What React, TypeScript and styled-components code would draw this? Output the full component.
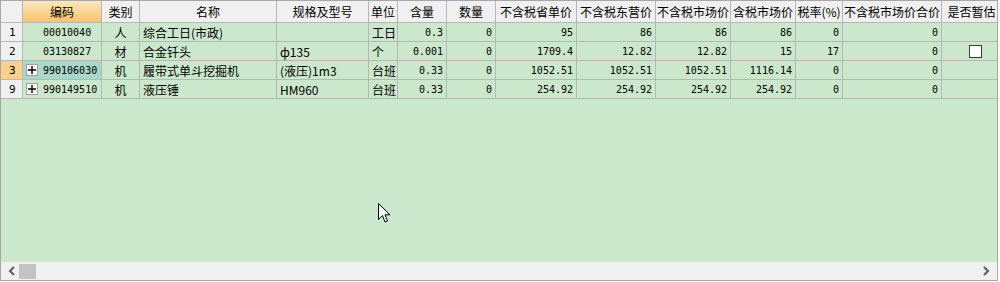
import styled, { createGlobalStyle, css } from "styled-components";

const GlobalStyle = createGlobalStyle`
  html, body { margin: 0; padding: 0; background: #ffffff; }
  #root { width: 1000px; height: 282px; }
`;

type Align = "left" | "center" | "right";

interface Column {
  key: string;
  title: string;
  width: number;
  align: Align;
  mono?: boolean;
}

const columns: Column[] = [
  { key: "code", title: "编码", width: 79, align: "left", mono: true },
  { key: "type", title: "类别", width: 38, align: "center" },
  { key: "name", title: "名称", width: 137, align: "left" },
  { key: "spec", title: "规格及型号", width: 92, align: "left" },
  { key: "unit", title: "单位", width: 29, align: "left" },
  { key: "qty", title: "含量", width: 49, align: "right", mono: true },
  { key: "count", title: "数量", width: 49, align: "right", mono: true },
  { key: "p1", title: "不含税省单价", width: 81, align: "right", mono: true },
  { key: "p2", title: "不含税东营价", width: 79, align: "right", mono: true },
  { key: "p3", title: "不含税市场价", width: 75, align: "right", mono: true },
  { key: "p4", title: "含税市场价", width: 65, align: "right", mono: true },
  { key: "tax", title: "税率(%)", width: 47, align: "right", mono: true },
  { key: "total", title: "不含税市场价合价", width: 99, align: "right", mono: true },
  { key: "est", title: "是否暂估", width: 60, align: "center" },
];

interface Item {
  no: string;
  tree: boolean;
  selected?: boolean;
  checkbox?: boolean;
  values: Record<string, string>;
}

const rows: Item[] = [
  {
    no: "1",
    tree: false,
    values: {
      code: "00010040", type: "人", name: "综合工日(市政)", spec: "", unit: "工日",
      qty: "0.3", count: "0", p1: "95", p2: "86", p3: "86", p4: "86", tax: "0", total: "0", est: "",
    },
  },
  {
    no: "2",
    tree: false,
    checkbox: true,
    values: {
      code: "03130827", type: "材", name: "合金钎头", spec: "ф135", unit: "个",
      qty: "0.001", count: "0", p1: "1709.4", p2: "12.82", p3: "12.82", p4: "15", tax: "17", total: "0", est: "",
    },
  },
  {
    no: "3",
    tree: true,
    selected: true,
    values: {
      code: "990106030", type: "机", name: "履带式单斗挖掘机", spec: "(液压)1m3", unit: "台班",
      qty: "0.33", count: "0", p1: "1052.51", p2: "1052.51", p3: "1052.51", p4: "1116.14", tax: "0", total: "0", est: "",
    },
  },
  {
    no: "9",
    tree: true,
    values: {
      code: "990149510", type: "机", name: "液压锤", spec: "HM960", unit: "台班",
      qty: "0.33", count: "0", p1: "254.92", p2: "254.92", p3: "254.92", p4: "254.92", tax: "0", total: "0", est: "",
    },
  },
];

const Frame = styled.div`
  position: relative;
  width: 998px;
  height: 281px;
  box-sizing: border-box;
  border: 1px solid #a7a7a7;
  display: flex;
  flex-direction: column;
  overflow: hidden;
  font-family: "Noto Sans CJK SC", sans-serif;
  font-size: 12px;
  color: #000;
`;

const GridArea = styled.div`
  flex: 1;
  background: #cce8cc;
  overflow: hidden;
`;

const Row = styled.div<{ $head?: boolean }>`
  display: flex;
  height: ${(p) => (p.$head ? 22 : 19)}px;
  width: max-content;
`;

const monoText = css`
  font-family: "DejaVu Sans Mono", "Noto Sans CJK SC", monospace;
  font-size: 10px;
`;

const cellBase = css`
  box-sizing: border-box;
  flex: none;
  height: 100%;
  border-right: 1px solid #b7b7b7;
  border-bottom: 1px solid #b7b7b7;
  display: flex;
  align-items: center;
  white-space: nowrap;
  overflow: hidden;
`;

const RowHead = styled.div<{ $active?: boolean }>`
  ${cellBase};
  ${monoText};
  font-size: 11px;
  width: 22px;
  padding-left: 8px;
  background: ${(p) => (p.$active ? "#fdd08c" : "#f0f0f0")};
`;

const HeadCell = styled.div<{ $w: number; $active?: boolean }>`
  ${cellBase};
  width: ${(p) => p.$w}px;
  justify-content: center;
  line-height: 20px;
  background: ${(p) =>
    p.$active ? "linear-gradient(#fde7bd, #f6c56c)" : "#f0f0f0"};
`;

const Cell = styled.div<{ $w: number; $align: Align; $mono?: boolean; $selected?: boolean }>`
  ${cellBase};
  width: ${(p) => p.$w}px;
  padding: 0 ${(p) => (p.$align === "right" ? 3 : 2)}px 0 ${(p) => (p.$align === "left" ? 3 : 2)}px;
  justify-content: ${(p) =>
    p.$align === "left" ? "flex-start" : p.$align === "right" ? "flex-end" : "center"};
  background: ${(p) => (p.$selected ? "#a9d8ca" : "transparent")};
  ${(p) => p.$mono && monoText}
`;

const TreeSlot = styled.span`
  width: 17px;
  flex: none;
  display: flex;
  align-items: center;
`;

const Expander = styled.span`
  box-sizing: border-box;
  width: 12px;
  height: 12px;
  background: #fff;
  border: 1px solid #a0a0a0;
  display: flex;
  align-items: center;
  justify-content: center;
`;

const CheckBox = styled.span`
  box-sizing: border-box;
  width: 13px;
  height: 13px;
  margin-left: 8px;
  background: #fff;
  border: 1px solid #3a3a3a;
`;

const ScrollBar = styled.div`
  height: 18px;
  flex: none;
  background: #f0f0f0;
  display: flex;
  align-items: center;
  padding: 0 6px;
`;

const ArrowBtn = styled.span<{ $right?: boolean }>`
  width: 10px;
  display: flex;
  justify-content: center;
  ${(p) => p.$right && "margin-left: auto;"}
`;

const Thumb = styled.span`
  width: 17px;
  height: 15px;
  margin-left: 2px;
  background: #c3c3c3;
`;

const Pointer = styled.svg`
  position: absolute;
  left: 377px;
  top: 202px;
`;

const Chevron = ({ right }: { right?: boolean }) => (
  <svg width="8" height="10" viewBox="0 0 8 10">
    <path
      d={right ? "M2 1 L6 5 L2 9" : "M6 1 L2 5 L6 9"}
      fill="none"
      stroke="#606060"
      strokeWidth="2.2"
    />
  </svg>
);

const Plus = () => (
  <svg width="8" height="8" viewBox="0 0 8 8">
    <path d="M0 4 H8 M4 0 V8" stroke="#000" strokeWidth="1.4" />
  </svg>
);

export default function App() {
  return (
    <>
      <GlobalStyle />
      <Frame>
        <GridArea>
          <Row $head>
            <RowHead />
            {columns.map((c) => (
              <HeadCell key={c.key} $w={c.width} $active={c.key === "code"}>
                {c.title}
              </HeadCell>
            ))}
          </Row>
          {rows.map((r) => (
            <Row key={r.no}>
              <RowHead $active={r.selected}>{r.no}</RowHead>
              {columns.map((c) => (
                <Cell
                  key={c.key}
                  $w={c.width}
                  $align={c.align}
                  $mono={c.mono}
                  $selected={r.selected && c.key === "code"}
                >
                  {c.key === "code" && (
                    <TreeSlot>
                      {r.tree && (
                        <Expander>
                          <Plus />
                        </Expander>
                      )}
                    </TreeSlot>
                  )}
                  {c.key === "est" && r.checkbox ? <CheckBox /> : r.values[c.key]}
                </Cell>
              ))}
            </Row>
          ))}
        </GridArea>
        <ScrollBar>
          <ArrowBtn>
            <Chevron />
          </ArrowBtn>
          <Thumb />
          <ArrowBtn $right>
            <Chevron right />
          </ArrowBtn>
        </ScrollBar>
        <Pointer width="13" height="21" viewBox="0 0 13 21">
          <path
            d="M0.5 0.5 L0.5 16.5 L4.5 12.5 L7 19 L9.5 18 L7 11.8 L12 11.8 Z"
            fill="#fff"
            stroke="#000"
            strokeWidth="1"
          />
        </Pointer>
      </Frame>
    </>
  );
}
